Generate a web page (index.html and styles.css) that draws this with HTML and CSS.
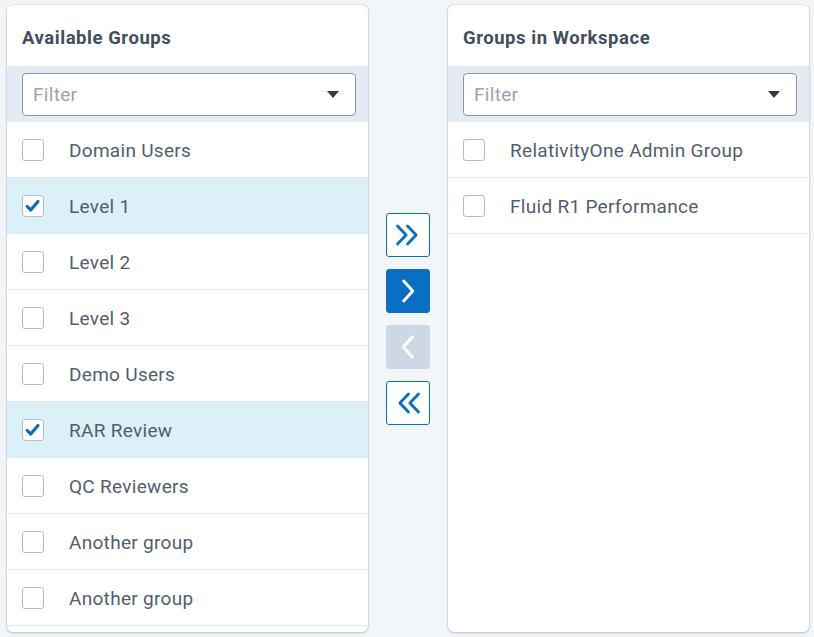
FILE: index.html
```html
<!DOCTYPE html>
<html>
<head>
<meta charset="utf-8">
<link rel="stylesheet" href="styles.css">
</head>
<body>
<div class="picker">
  <section class="card">
    <h2 class="card-title">Available Groups</h2>
    <div class="filter-band">
      <div class="filter"><span class="placeholder">Filter</span><span class="caret"></span></div>
    </div>
    <ul class="list">
      <li class="row"><span class="cb"></span><span class="label">Domain Users</span></li>
      <li class="row selected"><span class="cb checked"><svg viewBox="0 0 22 22" width="20" height="20"><path d="M4.5 11.5 L8.5 15.5 L16.5 6" fill="none" stroke="#0a6bbf" stroke-width="3.4" stroke-linecap="round" stroke-linejoin="round"/></svg></span><span class="label">Level 1</span></li>
      <li class="row"><span class="cb"></span><span class="label">Level 2</span></li>
      <li class="row"><span class="cb"></span><span class="label">Level 3</span></li>
      <li class="row"><span class="cb"></span><span class="label">Demo Users</span></li>
      <li class="row selected"><span class="cb checked"><svg viewBox="0 0 22 22" width="20" height="20"><path d="M4.5 11.5 L8.5 15.5 L16.5 6" fill="none" stroke="#0a6bbf" stroke-width="3.4" stroke-linecap="round" stroke-linejoin="round"/></svg></span><span class="label">RAR Review</span></li>
      <li class="row"><span class="cb"></span><span class="label">QC Reviewers</span></li>
      <li class="row"><span class="cb"></span><span class="label">Another group</span></li>
      <li class="row"><span class="cb"></span><span class="label">Another group</span></li>
    </ul>
  </section>

  <div class="actions">
    <button class="btn outline" aria-label="Move all right"><svg viewBox="0 0 44 44" width="44" height="44"><path d="M11 12.5 L20 22 L11 31.5 M21.5 12.5 L30.5 22 L21.5 31.5" fill="none" stroke="#0b6fc1" stroke-width="3" stroke-linecap="round" stroke-linejoin="round"/></svg></button>
    <button class="btn primary" aria-label="Move right"><svg viewBox="0 0 44 44" width="44" height="44"><path d="M17.5 11.5 L27 22 L17.5 32.5" fill="none" stroke="#ffffff" stroke-width="3" stroke-linecap="round" stroke-linejoin="round"/></svg></button>
    <button class="btn disabled" aria-label="Move left"><svg viewBox="0 0 44 44" width="44" height="44"><path d="M26.5 11.5 L17 22 L26.5 32.5" fill="none" stroke="#ffffff" stroke-width="3" stroke-linecap="round" stroke-linejoin="round"/></svg></button>
    <button class="btn outline" aria-label="Move all left"><svg viewBox="0 0 44 44" width="44" height="44"><path d="M22.5 12.5 L13.5 22 L22.5 31.5 M33 12.5 L24 22 L33 31.5" fill="none" stroke="#0b6fc1" stroke-width="3" stroke-linecap="round" stroke-linejoin="round"/></svg></button>
  </div>

  <section class="card">
    <h2 class="card-title">Groups in Workspace</h2>
    <div class="filter-band">
      <div class="filter"><span class="placeholder">Filter</span><span class="caret"></span></div>
    </div>
    <ul class="list">
      <li class="row"><span class="cb"></span><span class="label">RelativityOne Admin Group</span></li>
      <li class="row"><span class="cb"></span><span class="label">Fluid R1 Performance</span></li>
    </ul>
  </section>
</div>
</body>
</html>
```

FILE: styles.css
```css
* { box-sizing: border-box; }
html, body { margin: 0; padding: 0; }
body {
  background: #f2f6f9;
  font-family: Roboto, "Liberation Sans", sans-serif;
  width: 814px;
  height: 637px;
  overflow: hidden;
}
.picker {
  display: flex;
  align-items: center;
  padding: 5px 5px 5px 7px;
  height: 637px;
}
.card {
  width: 361px;
  height: 627px;
  background: #ffffff;
  border-radius: 6px;
  box-shadow: 0 1px 3px rgba(60, 80, 110, 0.28), 0 0 0 1px rgba(200, 212, 226, 0.35);
  overflow: hidden;
  display: flex;
  flex-direction: column;
}
.card-title {
  margin: 0;
  height: 61px;
  padding: 22px 0 0 15px;
  font-size: 18.5px;
  font-weight: 700;
  color: #434e5c;
  letter-spacing: 0.55px;
}
.filter-band {
  background: #e5ebf2;
  height: 56px;
  padding: 7px 12px 6px 15px;
}
.filter {
  height: 43px;
  background: #fff;
  border: 1px solid #8c95a4;
  border-radius: 4px;
  display: flex;
  align-items: center;
  justify-content: space-between;
  padding: 0 16px 0 10px;
}
.placeholder {
  font-size: 19px;
  letter-spacing: 0.3px;
  color: #9aa3b0;
}
.caret {
  width: 0;
  height: 0;
  border-left: 6px solid transparent;
  border-right: 6px solid transparent;
  border-top: 7px solid #333b46;
}
.list {
  list-style: none;
  margin: 0;
  padding: 0;
}
.row {
  height: 56px;
  display: flex;
  align-items: center;
  padding-left: 15px;
  border-bottom: 1px solid #e1e7ee;
}
.row.selected {
  background: #dcf0f7;
}
.cb {
  width: 22px;
  height: 22px;
  border: 1px solid #aebdd0;
  border-radius: 3px;
  background: #fff;
  display: flex;
  align-items: center;
  justify-content: center;
  flex: none;
}
.label {
  margin-left: 25px;
  padding-top: 1px;
  font-size: 19px;
  letter-spacing: 0.3px;
  color: #535e6d;
}
.actions {
  width: 80px;
  display: flex;
  flex-direction: column;
  align-items: center;
  gap: 12px;
}
.btn {
  width: 44px;
  height: 44px;
  border-radius: 3px;
  padding: 0;
  display: flex;
  align-items: center;
  justify-content: center;
  border: 1px solid #0b6fc1;
  background: #fff;
}
.btn svg { display: block; }
.btn.primary {
  background: #0b6fc1;
}
.btn.disabled {
  background: #ccd8e5;
  border-color: #ccd8e5;
}
```
